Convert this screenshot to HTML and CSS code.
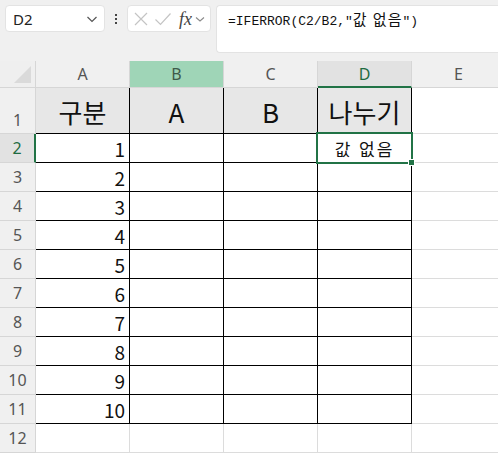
FILE: index.html
```html
<!DOCTYPE html>
<html lang="ko">
<head>
<meta charset="utf-8">
<link rel="stylesheet" href="styles.css">
</head>
<body>
<div class="toolbar">
  <div class="namebox">
    <span class="name">D2</span>
    <svg class="chev" width="12" height="8" viewBox="0 0 12 8"><path d="M1.5 2 L6 6.5 L10.5 2" fill="none" stroke="#555" stroke-width="1.2"/></svg>
  </div>
  <div class="dots"><i></i><i></i><i></i></div>
  <div class="fxbox">
    <svg width="16" height="16" viewBox="0 0 16 16"><path d="M2 2 L14 14 M14 2 L2 14" stroke="#c4c4c4" stroke-width="1.2" fill="none"/></svg>
    <svg width="18" height="16" viewBox="0 0 18 16"><path d="M1.5 8.5 L6.5 13.5 L16.5 2.5" stroke="#c4c4c4" stroke-width="1.2" fill="none"/></svg>
    <span class="fx">fx</span>
    <svg class="chev2" width="10" height="8" viewBox="0 0 10 8"><path d="M1 2.5 L5 6 L9 2.5" fill="none" stroke="#8a8a8a" stroke-width="1.1"/></svg>
  </div>
  <div class="formula">=IFERROR(C2/B2,"<span class="ko">값 없음</span>")</div>
</div>
<div class="sheet">
  <div class="corner"><span class="tri"></span></div>
  <div class="ch">A</div>
  <div class="ch ch-green">B</div>
  <div class="ch">C</div>
  <div class="ch ch-sel">D</div>
  <div class="ch">E</div>

  <div class="rh rh-tall">1</div>
  <div class="c t hd">구분</div>
  <div class="c t hd">A</div>
  <div class="c t hd">B</div>
  <div class="c t hd">나누기</div>
  <div class="c"></div>

  <div class="rh rh-sel">2</div>
  <div class="c t num">1</div>
  <div class="c t"></div>
  <div class="c t"></div>
  <div class="c t res"><span>값 없음</span><i class="sel"></i></div>
  <div class="c"></div>

  <div class="rh">3</div><div class="c t num">2</div><div class="c t"></div><div class="c t"></div><div class="c t"></div><div class="c"></div>
  <div class="rh">4</div><div class="c t num">3</div><div class="c t"></div><div class="c t"></div><div class="c t"></div><div class="c"></div>
  <div class="rh">5</div><div class="c t num">4</div><div class="c t"></div><div class="c t"></div><div class="c t"></div><div class="c"></div>
  <div class="rh">6</div><div class="c t num">5</div><div class="c t"></div><div class="c t"></div><div class="c t"></div><div class="c"></div>
  <div class="rh">7</div><div class="c t num">6</div><div class="c t"></div><div class="c t"></div><div class="c t"></div><div class="c"></div>
  <div class="rh">8</div><div class="c t num">7</div><div class="c t"></div><div class="c t"></div><div class="c t"></div><div class="c"></div>
  <div class="rh">9</div><div class="c t num">8</div><div class="c t"></div><div class="c t"></div><div class="c t"></div><div class="c"></div>
  <div class="rh">10</div><div class="c t num">9</div><div class="c t"></div><div class="c t"></div><div class="c t"></div><div class="c"></div>
  <div class="rh">11</div><div class="c t num">10</div><div class="c t"></div><div class="c t"></div><div class="c t"></div><div class="c"></div>
  <div class="rh">12</div><div class="c"></div><div class="c"></div><div class="c"></div><div class="c"></div><div class="c"></div>
</div>
</body>
</html>
```

FILE: styles.css
```css
html, body {
  margin: 0;
  padding: 0;
  background: #ffffff;
  overflow: hidden;
}
body {
  width: 498px;
  height: 456px;
  font-family: "Noto Sans", "Noto Sans CJK KR", sans-serif;
}
.toolbar {
  height: 61px;
  background: #f0f0f0;
  box-sizing: border-box;
  padding: 5px 0 0 5px;
  display: flex;
  align-items: flex-start;
}
.namebox {
  width: 100px;
  height: 27px;
  box-sizing: border-box;
  background: #fff;
  border: 1px solid #e3e3e3;
  border-radius: 4px;
  display: flex;
  align-items: center;
  justify-content: space-between;
  padding: 0 6px 0 7px;
}
.name {
  font-size: 15px;
  color: #222;
}
.dots {
  width: 22px;
  height: 27px;
  display: flex;
  flex-direction: column;
  align-items: center;
  justify-content: center;
  gap: 2px;
}
.dots i {
  display: block;
  width: 2px;
  height: 2px;
  background: #444;
}
.fxbox {
  width: 84px;
  height: 27px;
  box-sizing: border-box;
  background: #fff;
  border: 1px solid #e3e3e3;
  border-radius: 4px;
  display: flex;
  align-items: center;
  padding: 0 4px 0 5px;
  gap: 5px;
}
.fx {
  font-family: "Liberation Serif", "DejaVu Serif", serif;
  font-style: italic;
  font-size: 18px;
  color: #444;
  margin-left: 2px;
  line-height: 1;
}
.chev2 { margin-left: -2px; }
.formula {
  margin-left: 5px;
  flex: 1;
  height: 48px;
  box-sizing: border-box;
  background: #fff;
  border: 1px solid #e3e3e3;
  border-right: none;
  border-radius: 4px 0 0 4px;
  padding: 4px 0 0 11px;
  font-family: "Liberation Mono", "Noto Sans CJK KR", monospace;
  font-size: 13px;
  line-height: 18px;
  color: #111;
}
.ko {
  font-family: "Noto Sans CJK KR", sans-serif;
  font-size: 15px;
  letter-spacing: 1px;
}
.sheet {
  display: grid;
  grid-template-columns: 36px repeat(5, 94px);
  grid-template-rows: 27px 46px repeat(11, 29px);
}
.sheet > div {
  box-sizing: border-box;
}
.corner {
  background: #efefef;
  border-right: 1px solid #d6d6d6;
  border-bottom: 1px solid #d6d6d6;
  position: relative;
}
.tri {
  position: absolute;
  right: 4px;
  bottom: 4px;
  width: 0;
  height: 0;
  border-left: 17px solid transparent;
  border-bottom: 17px solid #dadada;
}
.ch {
  background: #f0f0f0;
  border-right: 1px solid #d6d6d6;
  border-bottom: 1px solid #d6d6d6;
  display: flex;
  align-items: center;
  justify-content: center;
  font-size: 16px;
  color: #555;
}
.ch-green {
  background: #9fd5b7;
  color: #3f5a4a;
}
.ch-sel {
  background: #e2e2e2;
  color: #1e6b41;
  border-bottom: 2px solid #217346;
}
.rh {
  background: #f0f0f0;
  border-right: 1px solid #d6d6d6;
  border-bottom: 1px solid #d6d6d6;
  display: flex;
  align-items: center;
  justify-content: center;
  font-size: 16px;
  color: #555;
}
.rh-tall {
  align-items: flex-end;
  padding-bottom: 2px;
}
.rh-sel {
  background: #e2e2e2;
  color: #1e6b41;
  border-right: 2px solid #217346;
}
.c {
  border-right: 1px solid #dcdcdc;
  border-bottom: 1px solid #dcdcdc;
  background: #fff;
}
.c.t {
  border-right: 1px solid #000;
  border-bottom: 1px solid #000;
  position: relative;
}
.hd {
  background: #e7e7e7 !important;
  display: flex;
  align-items: center;
  justify-content: center;
  font-family: "Noto Sans CJK KR", sans-serif;
  font-size: 26px;
  color: #111;
  padding-top: 2px;
}
.num {
  display: flex;
  align-items: center;
  justify-content: flex-end;
  padding-right: 4px;
  font-family: "Noto Sans CJK KR", sans-serif;
  font-size: 19px;
  color: #111;
}
.res {
  display: flex;
  align-items: center;
  justify-content: center;
  font-family: "Noto Sans CJK KR", sans-serif;
  font-size: 17px;
  letter-spacing: 2px;
  color: #111;
}
.sel {
  position: absolute;
  left: -2px;
  top: -2px;
  right: -2px;
  bottom: -2px;
  border: 2px solid #217346;
  z-index: 2;
}
.sel::after {
  content: "";
  position: absolute;
  right: -4px;
  bottom: -4px;
  width: 5px;
  height: 5px;
  background: #217346;
  border: 1px solid #fff;
}
```
